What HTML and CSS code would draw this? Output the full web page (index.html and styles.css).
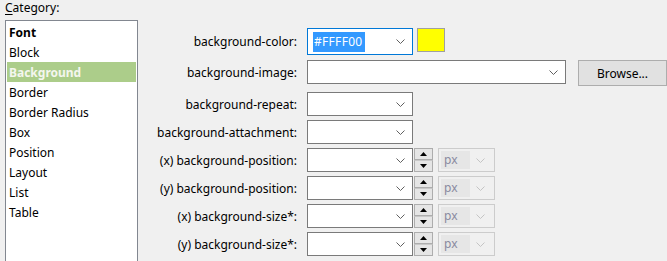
FILE: index.html
```html
<!DOCTYPE html>
<html lang="en">
<head>
  <meta charset="UTF-8">
  <title>Style Builder - Background</title>
  <link rel="stylesheet" href="styles.css">
</head>
<body>
  <div class="dialog">
    <div class="categories">
      <div class="cat-label"><u>C</u>ategory:</div>
      <ul class="cat-list">
        <li class="bold">Font</li>
        <li>Block</li>
        <li class="selected">Background</li>
        <li>Border</li>
        <li>Border Radius</li>
        <li>Box</li>
        <li>Position</li>
        <li>Layout</li>
        <li>List</li>
        <li>Table</li>
      </ul>
    </div>

    <div class="fields">
      <div class="row row-color">
        <label>background-color:</label>
        <div class="select focused">
          <span class="value"><span class="sel-text">#FFFF00</span></span>
          <svg class="chev" width="9" height="5" viewBox="0 0 9 5"><polyline points="0.5,0.5 4.5,4.5 8.5,0.5" fill="none" stroke="#606060" stroke-width="1"/></svg>
        </div>
        <div class="swatch"></div>
      </div>

      <div class="row row-image">
        <label>background-image:</label>
        <div class="select wide">
          <span class="value"></span>
          <svg class="chev" width="9" height="5" viewBox="0 0 9 5"><polyline points="0.5,0.5 4.5,4.5 8.5,0.5" fill="none" stroke="#606060" stroke-width="1"/></svg>
        </div>
        <button class="browse">Browse...</button>
      </div>

      <div class="row row-repeat">
        <label>background-repeat:</label>
        <div class="select">
          <span class="value"></span>
          <svg class="chev" width="9" height="5" viewBox="0 0 9 5"><polyline points="0.5,0.5 4.5,4.5 8.5,0.5" fill="none" stroke="#606060" stroke-width="1"/></svg>
        </div>
      </div>

      <div class="row">
        <label>background-attachment:</label>
        <div class="select">
          <span class="value"></span>
          <svg class="chev" width="9" height="5" viewBox="0 0 9 5"><polyline points="0.5,0.5 4.5,4.5 8.5,0.5" fill="none" stroke="#606060" stroke-width="1"/></svg>
        </div>
      </div>

      <div class="row">
        <label>(x) background-position:</label>
        <div class="select">
          <span class="value"></span>
          <svg class="chev" width="9" height="5" viewBox="0 0 9 5"><polyline points="0.5,0.5 4.5,4.5 8.5,0.5" fill="none" stroke="#606060" stroke-width="1"/></svg>
        </div>
        <div class="spin">
          <div class="spin-btn"><svg width="7" height="4" viewBox="0 0 7 4"><polygon points="3.5,0 7,4 0,4" fill="#000"/></svg></div>
          <div class="spin-btn"><svg width="7" height="4" viewBox="0 0 7 4"><polygon points="0,0 7,0 3.5,4" fill="#000"/></svg></div>
        </div>
        <div class="unit">
          <span class="unit-text">px</span>
          <svg class="chev" width="9" height="5" viewBox="0 0 9 5"><polyline points="0.5,0.5 4.5,4.5 8.5,0.5" fill="none" stroke="#c4c4c4" stroke-width="1"/></svg>
        </div>
      </div>

      <div class="row">
        <label>(y) background-position:</label>
        <div class="select">
          <span class="value"></span>
          <svg class="chev" width="9" height="5" viewBox="0 0 9 5"><polyline points="0.5,0.5 4.5,4.5 8.5,0.5" fill="none" stroke="#606060" stroke-width="1"/></svg>
        </div>
        <div class="spin">
          <div class="spin-btn"><svg width="7" height="4" viewBox="0 0 7 4"><polygon points="3.5,0 7,4 0,4" fill="#000"/></svg></div>
          <div class="spin-btn"><svg width="7" height="4" viewBox="0 0 7 4"><polygon points="0,0 7,0 3.5,4" fill="#000"/></svg></div>
        </div>
        <div class="unit">
          <span class="unit-text">px</span>
          <svg class="chev" width="9" height="5" viewBox="0 0 9 5"><polyline points="0.5,0.5 4.5,4.5 8.5,0.5" fill="none" stroke="#c4c4c4" stroke-width="1"/></svg>
        </div>
      </div>

      <div class="row">
        <label>(x) background-size*:</label>
        <div class="select">
          <span class="value"></span>
          <svg class="chev" width="9" height="5" viewBox="0 0 9 5"><polyline points="0.5,0.5 4.5,4.5 8.5,0.5" fill="none" stroke="#606060" stroke-width="1"/></svg>
        </div>
        <div class="spin">
          <div class="spin-btn"><svg width="7" height="4" viewBox="0 0 7 4"><polygon points="3.5,0 7,4 0,4" fill="#000"/></svg></div>
          <div class="spin-btn"><svg width="7" height="4" viewBox="0 0 7 4"><polygon points="0,0 7,0 3.5,4" fill="#000"/></svg></div>
        </div>
        <div class="unit">
          <span class="unit-text">px</span>
          <svg class="chev" width="9" height="5" viewBox="0 0 9 5"><polyline points="0.5,0.5 4.5,4.5 8.5,0.5" fill="none" stroke="#c4c4c4" stroke-width="1"/></svg>
        </div>
      </div>

      <div class="row">
        <label>(y) background-size*:</label>
        <div class="select">
          <span class="value"></span>
          <svg class="chev" width="9" height="5" viewBox="0 0 9 5"><polyline points="0.5,0.5 4.5,4.5 8.5,0.5" fill="none" stroke="#606060" stroke-width="1"/></svg>
        </div>
        <div class="spin">
          <div class="spin-btn"><svg width="7" height="4" viewBox="0 0 7 4"><polygon points="3.5,0 7,4 0,4" fill="#000"/></svg></div>
          <div class="spin-btn"><svg width="7" height="4" viewBox="0 0 7 4"><polygon points="0,0 7,0 3.5,4" fill="#000"/></svg></div>
        </div>
        <div class="unit">
          <span class="unit-text">px</span>
          <svg class="chev" width="9" height="5" viewBox="0 0 9 5"><polyline points="0.5,0.5 4.5,4.5 8.5,0.5" fill="none" stroke="#c4c4c4" stroke-width="1"/></svg>
        </div>
      </div>
    </div>
  </div>
</body>
</html>
```

FILE: styles.css
```css
html, body {
  margin: 0;
  height: 100%;
  overflow: hidden;
}
body {
  background: #f0f0f0;
  font-family: 'Noto Sans', 'DejaVu Sans', sans-serif;
  font-size: 12px;
  color: #000;
}
.dialog {
  display: flex;
  align-items: flex-start;
}
.categories {
  padding-left: 5px;
  width: 133px;
}
.cat-label {
  height: 20px;
  line-height: 16px;
}
.cat-label u {
  text-decoration-thickness: 1px;
  text-underline-offset: 2px;
}
.cat-list {
  list-style: none;
  margin: 0;
  padding: 1px;
  height: 242px;
  background: #fff;
  border: 1px solid #828790;
  box-sizing: border-box;
}
.cat-list li {
  height: 20px;
  line-height: 22px;
  padding-left: 2px;
}
.cat-list li.bold {
  font-weight: bold;
}
.cat-list li.selected {
  background: #accd8a;
  color: #f4f6ee;
  font-weight: bold;
}

.fields {
  padding-top: 28px;
  margin-left: 2px;
}
.row {
  display: flex;
  align-items: center;
  height: 24px;
  margin-top: 4px;
}
.row-color {
  margin-top: 0;
  height: 27px;
  align-items: flex-start;
}
.row-color label {
  line-height: 27px;
}
.row-image {
  margin-top: 5px;
}
.row-repeat {
  margin-top: 8px;
}
.row label {
  width: 157px;
  text-align: right;
  margin-right: 10px;
  white-space: nowrap;
}
.select {
  width: 106px;
  height: 24px;
  box-sizing: border-box;
  background: #fff;
  border: 1px solid #7a7a7a;
  display: flex;
  align-items: center;
  justify-content: space-between;
  padding: 0 7px 0 5px;
}
.select.focused {
  height: 27px;
  border-color: #0078d7;
}
.select.wide {
  width: 259px;
}
.sel-text {
  background: #3399ff;
  color: #fff;
  padding: 1px 2px 2px 1px;
  letter-spacing: 0.3px;
}
.chev {
  display: block;
  flex: none;
}
.swatch {
  width: 28px;
  height: 24px;
  box-sizing: border-box;
  margin-left: 4px;
  background: #ffff00;
  border: 1px solid #a0a0a0;
}
.browse {
  margin-left: 12px;
  width: 89px;
  height: 26px;
  background: #e1e1e1;
  border: 1px solid #adadad;
  font-family: inherit;
  font-size: 12px;
  color: #000;
  padding: 0;
  align-self: flex-start;
}
.spin {
  display: flex;
  flex-direction: column;
  margin-left: 1px;
  width: 19px;
  height: 24px;
}
.spin-btn {
  flex: 1;
  background: #e5e5e5;
  border: 1px solid #adadad;
  display: flex;
  align-items: center;
  justify-content: center;
}
.spin-btn + .spin-btn {
  border-top: 1px solid #c8c8c8;
}
.spin-btn svg {
  display: block;
}
.unit {
  margin-left: 5px;
  width: 57px;
  height: 24px;
  box-sizing: border-box;
  border: 1px solid #cccccc;
  background: #f0f0f0;
  display: flex;
  align-items: center;
  justify-content: space-between;
  padding: 2px 9px 2px 2px;
}
.unit-text {
  background: #e6e6e6;
  color: #8a8aa0;
  width: 26px;
  height: 18px;
  line-height: 18px;
  padding-left: 3px;
}
```
